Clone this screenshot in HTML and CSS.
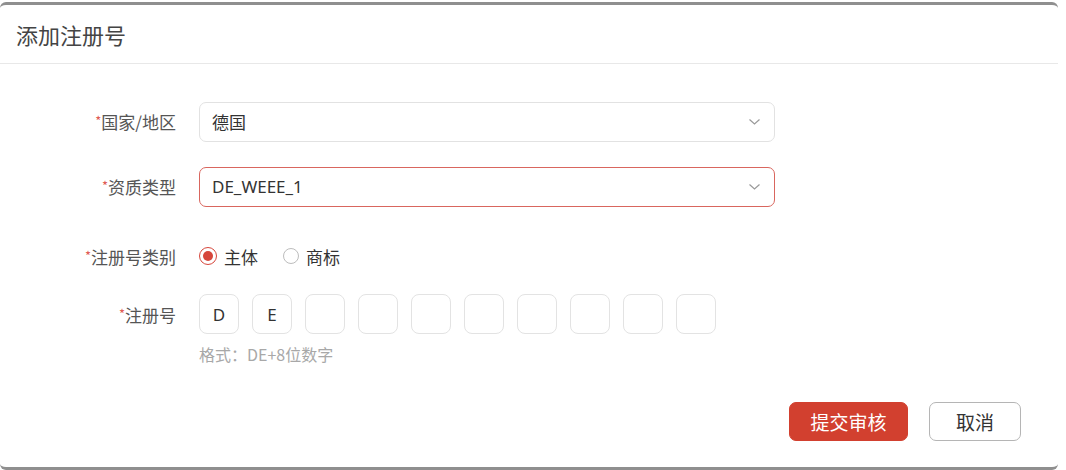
FILE: index.html
```html
<!DOCTYPE html>
<html lang="zh-CN">
<head>
<meta charset="utf-8">
<title>添加注册号</title>
<link rel="stylesheet" href="styles.css">
</head>
<body>
<div class="dialog">
  <div class="dialog-header">添加注册号</div>
  <div class="dialog-body">
    <div class="form-row">
      <div class="label"><span class="req">*</span>国家/地区</div>
      <div class="control">
        <div class="select">
          <span>德国</span>
          <svg class="chev" width="13" height="8" viewBox="0 0 13 8"><path d="M1.5 1.5 L6.5 6 L11.5 1.5" fill="none" stroke="#9a9a9a" stroke-width="1.2"/></svg>
        </div>
      </div>
    </div>
    <div class="form-row row2">
      <div class="label"><span class="req">*</span>资质类型</div>
      <div class="control">
        <div class="select select-error">
          <span>DE_WEEE_1</span>
          <svg class="chev" width="13" height="8" viewBox="0 0 13 8"><path d="M1.5 1.5 L6.5 6 L11.5 1.5" fill="none" stroke="#9a9a9a" stroke-width="1.2"/></svg>
        </div>
      </div>
    </div>
    <div class="form-row row3">
      <div class="label"><span class="req">*</span>注册号类别</div>
      <div class="control radios">
        <label class="radio"><span class="dot checked"></span><span>主体</span></label>
        <label class="radio"><span class="dot"></span><span>商标</span></label>
      </div>
    </div>
    <div class="form-row row4">
      <div class="label label-top"><span class="req">*</span>注册号</div>
      <div class="control">
        <div class="codes">
          <div class="code">D</div>
          <div class="code">E</div>
          <div class="code"></div>
          <div class="code"></div>
          <div class="code"></div>
          <div class="code"></div>
          <div class="code"></div>
          <div class="code"></div>
          <div class="code"></div>
          <div class="code"></div>
        </div>
        <div class="hint">格式：DE+8位数字</div>
      </div>
    </div>
  </div>
  <div class="dialog-footer">
    <button class="btn btn-primary">提交审核</button>
    <button class="btn btn-default">取消</button>
  </div>
</div>
</body>
</html>
```

FILE: styles.css
```css
* { box-sizing: border-box; }
html, body { margin: 0; padding: 0; background: #fff; }
body {
  padding-top: 2px;
  font-family: "Noto Sans", "Noto Sans CJK SC", sans-serif;
  color: #333;
}
.dialog {
  width: 1058px;
  height: 468px;
  background: #fff;
  border-top: 3px solid #8f8f8f;
  border-bottom: 3px solid #8f8f8f;
  border-radius: 6px;
  display: flex;
  flex-direction: column;
}
.dialog-header {
  height: 59px;
  padding-left: 16px;
  display: flex;
  align-items: center;
  font-size: 22px;
  color: #444;
  border-bottom: 1px solid #e8e8e8;
  font-family: "Noto Sans CJK SC", sans-serif;
}
.dialog-body {
  padding-top: 37px;
}
.form-row {
  display: flex;
  align-items: center;
}
.row2 { margin-top: 24px; }
.row3 { margin-top: 29px; height: 40px; }
.row4 { margin-top: 18px; align-items: flex-start; }
.label {
  width: 176px;
  flex-shrink: 0;
  text-align: right;
  font-size: 17px;
  color: #555;
  font-family: "Noto Sans CJK SC", sans-serif;
  line-height: 40px;
}
.req {
  color: #e05a52;
  font-size: 13px;
  vertical-align: 3px;
}
.control {
  margin-left: 23px;
}
.select {
  width: 576px;
  height: 40px;
  border: 1px solid #e2e2e2;
  border-radius: 7px;
  padding: 0 13px 0 12px;
  display: flex;
  align-items: center;
  justify-content: space-between;
  font-size: 17px;
  color: #333;
}
.select-error {
  border: 1.5px solid #d9665e;
}
.chev { display: block; }
.radios {
  display: flex;
  align-items: center;
  gap: 25px;
}
.radio {
  display: flex;
  align-items: center;
  gap: 7px;
  font-size: 17px;
  color: #333;
  font-family: "Noto Sans CJK SC", sans-serif;
}
.dot {
  width: 18px;
  height: 18px;
  border-radius: 50%;
  border: 1px solid #bdbdbd;
  display: flex;
  align-items: center;
  justify-content: center;
}
.radio + .radio .dot { width: 16px; height: 16px; }
.dot.checked {
  border: 1.5px solid #d6463b;
}
.dot.checked::after {
  content: "";
  width: 10px;
  height: 10px;
  border-radius: 50%;
  background: #d6463b;
}
.codes {
  display: flex;
  gap: 13px;
}
.code {
  width: 40px;
  height: 40px;
  border: 1px solid #e3e3e3;
  border-radius: 8px;
  display: flex;
  align-items: center;
  justify-content: center;
  font-size: 17px;
  color: #333;
}
.hint {
  margin-top: 10px;
  font-size: 16px;
  line-height: 20px;
  color: #a8a8a8;
  font-family: "Noto Sans CJK SC", sans-serif;
}
.dialog-footer {
  margin-top: 38px;
  display: flex;
  justify-content: flex-end;
  gap: 21px;
  padding-right: 37px;
}
.btn {
  height: 39px;
  border-radius: 7px;
  font-size: 19px;
  font-family: "Noto Sans CJK SC", sans-serif;
  display: flex;
  align-items: center;
  justify-content: center;
  padding: 0;
}
.btn-primary {
  width: 119px;
  background: #d2402f;
  border: 1px solid #d2402f;
  color: #fff;
}
.btn-default {
  width: 92px;
  background: #fff;
  border: 1px solid #b5b5b5;
  color: #333;
}
```
